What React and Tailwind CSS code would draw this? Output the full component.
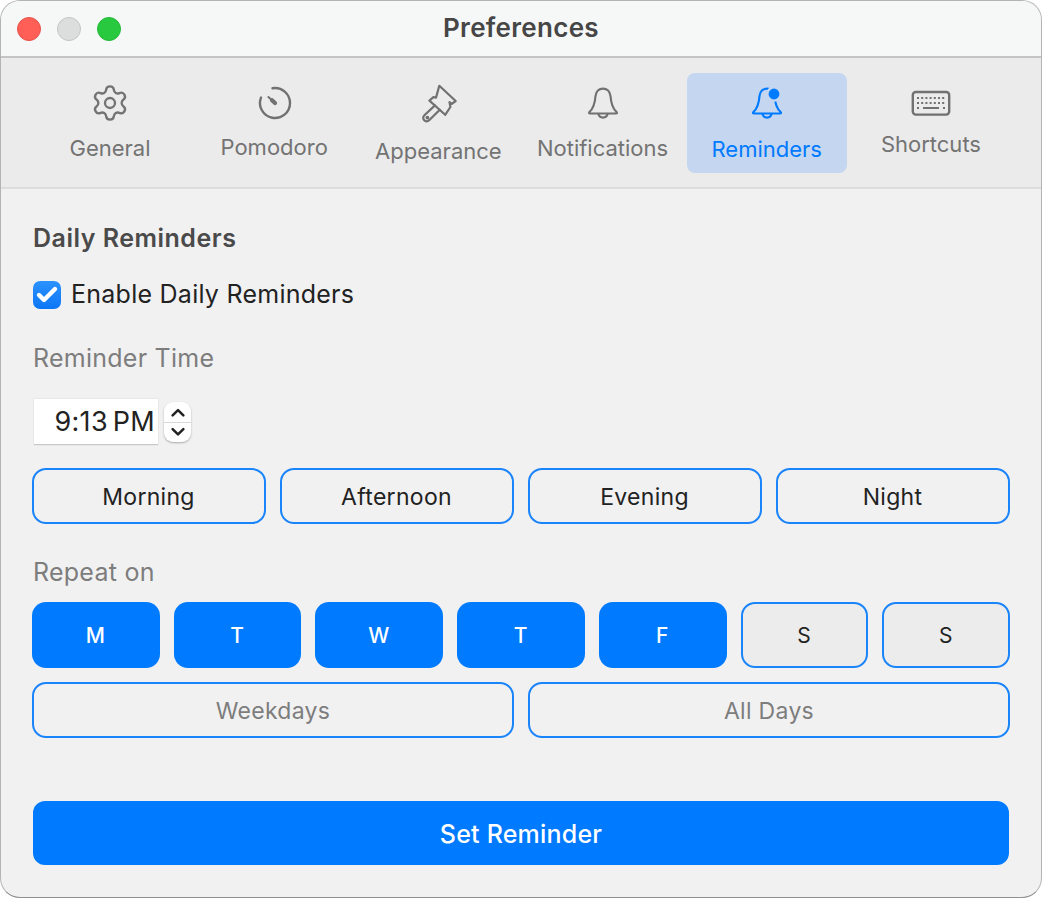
import React from 'react'
import { Settings, Check, ChevronUp, ChevronDown } from 'lucide-react'

function TimerIcon() {
  return (
    <svg width="40" height="40" viewBox="0 0 40 40" fill="none" stroke="#717171" strokeWidth="2.4" strokeLinecap="round" className="ml-[1px]">
      <path d="M17.5 5.2 A15 15 0 1 1 6 14.6" />
      <path d="M13.4 14 L20 20" strokeWidth="2" />
      <path d="M17 17.2 L20 20" strokeWidth="4.2" />
    </svg>
  )
}

function BrushIcon() {
  return (
    <svg width="40" height="44" viewBox="0 -1 40 44" fill="none" stroke="#717171" strokeWidth="2.2" strokeLinejoin="round" strokeLinecap="round" className="ml-[3px]">
      <path d="M19.3 3.8 L35.7 19 L31.8 21.8 L29.5 20.2 L30.4 25 L25.2 32.8 L9.4 18.6 L13.4 15.2 L16 15.6 Z" />
      <path d="M15 23.4 L4.4 33.2 C2.6 35 3 37.2 4.4 38.4 C6 39.8 8 39.4 9.4 38 L19.8 27.8" />
      <circle cx="7.4" cy="35.6" r="0.8" fill="#717171" />
    </svg>
  )
}

function BellIcon({ color = '#717171', dot = false }) {
  return (
    <svg width="36" height="40" viewBox="0 -1 36 40" fill="none" stroke={color} strokeWidth="2.2" strokeLinejoin="round">
      <path d="M18 4.6 C22 4.6 25 7.6 25.5 12 C26 19 27 24 31.6 28 Q32.6 29.5 31 29.5 H5 Q3.4 29.5 4.4 28 C9 24 10 19 10.5 12 C11 7.6 14 4.6 18 4.6 Z" />
      <path d="M13.4 29.8 A4.7 4.7 0 0 0 22.6 29.8" />
      {dot && <circle cx="25" cy="10" r="6.6" fill={color} stroke="#c5d6f0" strokeWidth="2.4" />}
    </svg>
  )
}

function KeyboardIcon() {
  const rowA = [7, 11.2, 15.4, 19.6, 23.8, 28, 32.2]
  return (
    <svg width="40" height="40" viewBox="0 0 40 40" fill="none" stroke="#717171">
      <rect x="1.8" y="9" width="36.4" height="22.6" rx="3" strokeWidth="2.4" />
      {rowA.map(x => <rect key={`a${x}`} x={x - 1} y="14" width="2" height="2" fill="#717171" stroke="none" />)}
      {rowA.map(x => <rect key={`b${x}`} x={x - 1} y="19" width="2" height="2" fill="#717171" stroke="none" />)}
      <rect x="6" y="24" width="2" height="2" fill="#717171" stroke="none" />
      <rect x="12" y="24" width="16" height="2" fill="#717171" stroke="none" />
      <rect x="32" y="24" width="2" height="2" fill="#717171" stroke="none" />
    </svg>
  )
}

function Tab({ label, icon, labelClass, active }) {
  return (
    <div className={`flex h-[100px] w-[160px] flex-col items-center rounded-lg pt-[10px] ${active ? 'bg-[#c5d6f0] text-[#007aff]' : 'text-[#737373]'}`}>
      <div className="flex h-[40px] items-center justify-center">{icon}</div>
      <span className={`text-[22px] leading-[30px] ${labelClass}`}>{label}</span>
    </div>
  )
}

function OutlineButton({ label, muted }) {
  return (
    <button
      type="button"
      className={`h-[56px] rounded-[14px] border-2 border-[#1a84fa] pt-[2px] text-[23px] tracking-[0.3px] ${muted ? 'text-[#7d7d7d]' : 'pr-[1px] text-[#222]'}`}
    >
      {label}
    </button>
  )
}

function DayButton({ label, on }) {
  return (
    <button
      type="button"
      className={`h-[66px] rounded-[14px] pt-[2px] pr-[1px] text-[21px] ${on ? 'bg-[#007aff] font-medium text-white' : 'border-2 border-[#1a84fa] bg-[#ececec] text-[#222]'}`}
    >
      {label}
    </button>
  )
}

export default function App() {
  return (
    <div className="h-[898px] w-[1042px] bg-white font-['Inter',sans-serif]">
      <div className="flex h-full flex-col overflow-hidden rounded-[20px] border border-[#b4b4b4] border-b-[#8f8f8f] bg-[#f1f1f2]">
        <div className="relative flex h-[57px] shrink-0 items-center justify-center border-b-2 border-[#c4c4c4] bg-[#f6f7f7] pb-[2px]">
          <div className="absolute left-[16px] top-[16px] flex gap-[16px]">
            <div className="h-[24px] w-[24px] rounded-full border border-[#e5534b] bg-[#ff5f57]" />
            <div className="h-[24px] w-[24px] rounded-full border border-[#c4c4c4] bg-[#dcdedd]" />
            <div className="h-[24px] w-[24px] rounded-full border border-[#25b83a] bg-[#28c93f]" />
          </div>
          <span className="text-[26px] font-semibold tracking-[0.3px] text-[#464646]">Preferences</span>
        </div>

        <div className="flex h-[131px] shrink-0 items-start justify-between border-b-2 border-[#dcdcdc] bg-[#ebebeb] pl-[29px] pr-[30px] pt-[15px]">
          <Tab label="General" icon={<Settings size={40} strokeWidth={1.4} />} labelClass="mt-[10px]" />
          <Tab label="Pomodoro" icon={<TimerIcon />} labelClass="mt-[9px]" />
          <Tab label="Appearance" icon={<BrushIcon />} labelClass="mt-[13px]" />
          <Tab label="Notifications" icon={<BellIcon />} labelClass="mt-[10px]" />
          <Tab label="Reminders" icon={<BellIcon color="#007aff" dot />} labelClass="mt-[11px]" active />
          <Tab label="Shortcuts" icon={<KeyboardIcon />} labelClass="mt-[6px]" />
        </div>

        <div className="flex flex-1 flex-col px-[31px]">
          <h2 className="mt-[32px] pl-px text-[25px] font-semibold leading-[34px] tracking-[0.5px] text-[#4a4a4a]">Daily Reminders</h2>

          <div className="mt-[26px] flex h-[28px] items-center gap-[10px] pl-px">
            <div className="flex h-[28px] w-[28px] items-center justify-center rounded-[7px] bg-linear-to-b from-[#2b92ff] to-[#0a76f5]">
              <Check size={24} strokeWidth={4.4} className="text-white" />
            </div>
            <span className="text-[25px] tracking-[0.25px] text-[#222]">Enable Daily Reminders</span>
          </div>

          <div className="mt-[33px] h-[32px] pl-px text-[25px] leading-[32px] tracking-[0.25px] text-[#7d7d7d]">Reminder Time</div>

          <div className="mt-[25px] flex h-[46px] items-center gap-[6px] pl-[2px]">
            <div className="flex h-[46px] w-[124px] items-center justify-end border-b border-[#c8c8c8] bg-white pr-[3px] pt-[2px] text-[27px] tracking-[0.3px] text-[#222] shadow-[0_0_1px_#bbb] [word-spacing:-3px]">
              9:13 PM
            </div>
            <div className="flex h-[40px] w-[27px] flex-col items-center justify-center rounded-[9px] bg-white text-[#222] shadow-[0_1px_2px_#aaa]">
              <ChevronUp size={22} strokeWidth={2.8} className="-mb-[2px]" />
              <div className="h-px w-full bg-[#d8d8d8]" />
              <ChevronDown size={22} strokeWidth={2.8} className="-mt-[2px]" />
            </div>
          </div>

          <div className="mt-[23px] grid grid-cols-4 gap-[14px]">
            <OutlineButton label="Morning" />
            <OutlineButton label="Afternoon" />
            <OutlineButton label="Evening" />
            <OutlineButton label="Night" />
          </div>

          <div className="mt-[32px] h-[32px] pl-px text-[25px] leading-[32px] tracking-[0.25px] text-[#7d7d7d]">Repeat on</div>

          <div className="mt-[14px] grid grid-cols-7 gap-[14px]">
            <DayButton label="M" on />
            <DayButton label="T" on />
            <DayButton label="W" on />
            <DayButton label="T" on />
            <DayButton label="F" on />
            <DayButton label="S" />
            <DayButton label="S" />
          </div>

          <div className="mt-[14px] grid grid-cols-2 gap-[14px]">
            <OutlineButton label="Weekdays" muted />
            <OutlineButton label="All Days" muted />
          </div>

          <button type="button" className="mx-px mt-[63px] h-[64px] rounded-[12px] bg-[#007aff] pt-[3px] text-[25px] font-medium tracking-[0.2px] text-white">
            Set Reminder
          </button>
        </div>
      </div>
    </div>
  )
}
